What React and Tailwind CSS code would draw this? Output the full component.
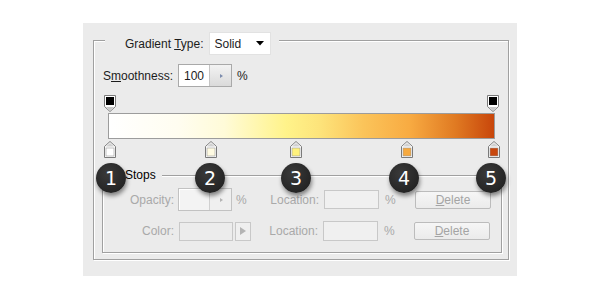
import React from 'react';

const sans = { fontFamily: '"Liberation Sans", Arial, sans-serif' };

const TopMarker = () => (
  <svg width="12" height="17" viewBox="0 0 12 17">
    <polygon points="0.5,0.5 11.5,0.5 11.5,11.5 6,16.5 0.5,11.5" fill="#fff" stroke="#7a7a7a" />
    <polygon points="2,12 10,12 6,15.5" fill="#c8c8c8" />
    <rect x="2" y="2" width="8" height="8" fill="#000" />
  </svg>
);

const BottomMarker = ({ color }) => (
  <svg width="12" height="17" viewBox="0 0 12 17">
    <polygon points="6,0.5 11.5,5.5 11.5,16.5 0.5,16.5 0.5,5.5" fill="#fff" stroke="#7a7a7a" />
    <polygon points="6,2 10,5.5 2,5.5" fill="#d0d0d0" />
    <rect x="2" y="7" width="8" height="8" fill={color} stroke="#9a9a9a" strokeWidth="0.6" />
  </svg>
);

const stops = [
  { left: 'left-[0px]', color: '#ffffff' },
  { left: 'left-[101px]', color: '#fffbe2' },
  { left: 'left-[186px]', color: '#fff27c' },
  { left: 'left-[297px]', color: '#f6a93e' },
  { left: 'left-[384px]', color: '#c8470d' },
];

const badges = [
  { n: 1, cls: 'left-[13px]' },
  { n: 2, cls: 'left-[112px]' },
  { n: 3, cls: 'left-[198px]' },
  { n: 4, cls: 'left-[306px]' },
  { n: 5, cls: 'left-[393px]' },
];

const Step = ({ color = '#7c8cae', size = 'small' }) => (
  <svg width="6" height="8" viewBox="0 0 6 8">
    {size === 'small' ? (
      <polygon points="2,2 5,4 2,6" fill={color} />
    ) : (
      <polygon points="0,0 6,4 0,8" fill={color} />
    )}
  </svg>
);

export default function App() {
  return (
    <div className="w-[600px] h-[300px] bg-white pt-[23px] pl-[83px] text-[12px] text-[#1c1c1c]" style={sans}>
      <div className="relative w-[434px] h-[253px] bg-[#ebebeb] pt-[17px] pl-[10px]">
        {/* outer group */}
        <div className="w-[416px] h-[220px] border border-[#a0a0a0] shadow-[inset_1px_1px_0_#fff,1px_1px_0_#fff]">
          <div className="-mt-[9px] ml-[11px] w-fit h-[23px] bg-[#ebebeb] pl-[20px] pr-[8px] flex items-center gap-[5px]">
            <span>Gradient <u>T</u>ype:</span>
            <div className="w-[62px] h-[23px] bg-white border border-[#e2e2e2] flex items-center justify-between pl-[5px] pr-[6px]">
              <span>Solid</span>
              <svg width="8" height="5" viewBox="0 0 8 5"><polygon points="0,0 8,0 4,4.5" fill="#000" /></svg>
            </div>
          </div>

          <div className="mt-[9px] ml-[9px] h-[23px] flex items-center">
            <span className="w-[75px]">S<u>m</u>oothness:</span>
            <div className="w-[54px] h-[23px] border border-[#a9a9a9] flex">
              <div className="w-[30px] bg-white flex items-center pl-[5px]">100</div>
              <div className="flex-1 border-l border-[#c4c4c4] bg-gradient-to-b from-[#f3f3f3] to-[#dadada] flex items-center justify-center">
                <Step />
              </div>
            </div>
            <span className="ml-[5px]">%</span>
          </div>

          {/* gradient editor */}
          <div className="mt-[8px] ml-[10px] w-[395px] h-[17px] flex justify-between">
            <TopMarker />
            <TopMarker />
          </div>
          <div className="mt-[1px] ml-[14px] w-[387px] h-[26px] border border-[#9c9c9c] bg-[linear-gradient(to_right,#ffffff_0%,#fffdf0_18%,#fffbd8_30%,#fff38a_46%,#fde37a_55%,#fbc45a_66%,#f8ab42_78%,#e07a22_90%,#c8460b_100%)]" />
          <div className="relative mt-[2px] ml-[10px] w-[396px] h-[17px]">
            {stops.map((s, i) => (
              <div key={i} className={`absolute top-0 ${s.left}`}>
                <BottomMarker color={s.color} />
              </div>
            ))}
          </div>

          {/* stops group */}
          <div className="mt-[17px] ml-[8px] w-[400px] h-[78px] border border-[#a0a0a0] shadow-[inset_1px_1px_0_#fff,1px_1px_0_#fff] text-[#a9a9a9]">
            <div className="-mt-[8px] ml-[19px] w-fit h-[14px] leading-[14px] bg-[#ebebeb] pl-[3px] pr-[6px] text-black">Stops</div>

            <div className="mt-[6px] h-[23px] flex items-center">
              <span className="w-[71px] text-right">Opacity:</span>
              <div className="ml-[4px] w-[54px] h-[23px] border border-[#c2c2c2] flex">
                <div className="w-[30px] bg-[#f3f3f3] border-t border-l border-white" />
                <div className="flex-1 border-l border-[#d0d0d0] bg-[#efefef] flex items-center justify-center">
                  <Step color="#b4b4b4" />
                </div>
              </div>
              <span className="ml-[4px] w-[33px]">%</span>
              <span className="w-[50px] text-right">Location:</span>
              <div className="ml-[5px] w-[55px] h-[19px] border border-[#c8c8c8] bg-[#f0f0f0]" />
              <span className="ml-[6px] w-[30px]">%</span>
              <div className="w-[76px] h-[18px] border border-[#bcbcbc] rounded-[2px] bg-gradient-to-b from-[#f6f6f6] to-[#ebebeb] flex items-center justify-center text-[#a4a4a4]">
                <span><u>D</u>elete</span>
              </div>
            </div>

            <div className="mt-[10px] h-[20px] flex items-center">
              <span className="w-[71px] text-right">Color:</span>
              <div className="ml-[5px] w-[54px] h-[19px] border border-[#c8c8c8] bg-[#ececec]" />
              <div className="ml-[2px] w-[16px] h-[19px] border border-[#c8c8c8] bg-[#efefef] flex items-center justify-center">
                <Step color="#b4b4b4" size="big" />
              </div>
              <span className="ml-[17px] w-[50px] text-right">Location:</span>
              <div className="ml-[5px] w-[55px] h-[20px] border border-[#c8c8c8] bg-[#f0f0f0]" />
              <span className="ml-[6px] w-[30px]">%</span>
              <div className="w-[76px] h-[18px] border border-[#bcbcbc] rounded-[2px] bg-gradient-to-b from-[#f6f6f6] to-[#ebebeb] flex items-center justify-center text-[#a4a4a4]">
                <span><u>D</u>elete</span>
              </div>
            </div>
          </div>
        </div>

        {/* numbered callouts */}
        {badges.map((b) => (
          <div
            key={b.n}
            className={`absolute top-[140px] ${b.cls} w-[30px] h-[30px] rounded-full bg-[radial-gradient(circle_at_40%_35%,#3a3a3a,#1c1c1c)] shadow-[1px_3px_4px_rgba(0,0,0,0.45)] flex items-center justify-center text-white text-[19px]`}
            style={{ fontFamily: '"DejaVu Sans", Verdana, sans-serif' }}
          >
            {b.n}
          </div>
        ))}
      </div>
    </div>
  );
}
